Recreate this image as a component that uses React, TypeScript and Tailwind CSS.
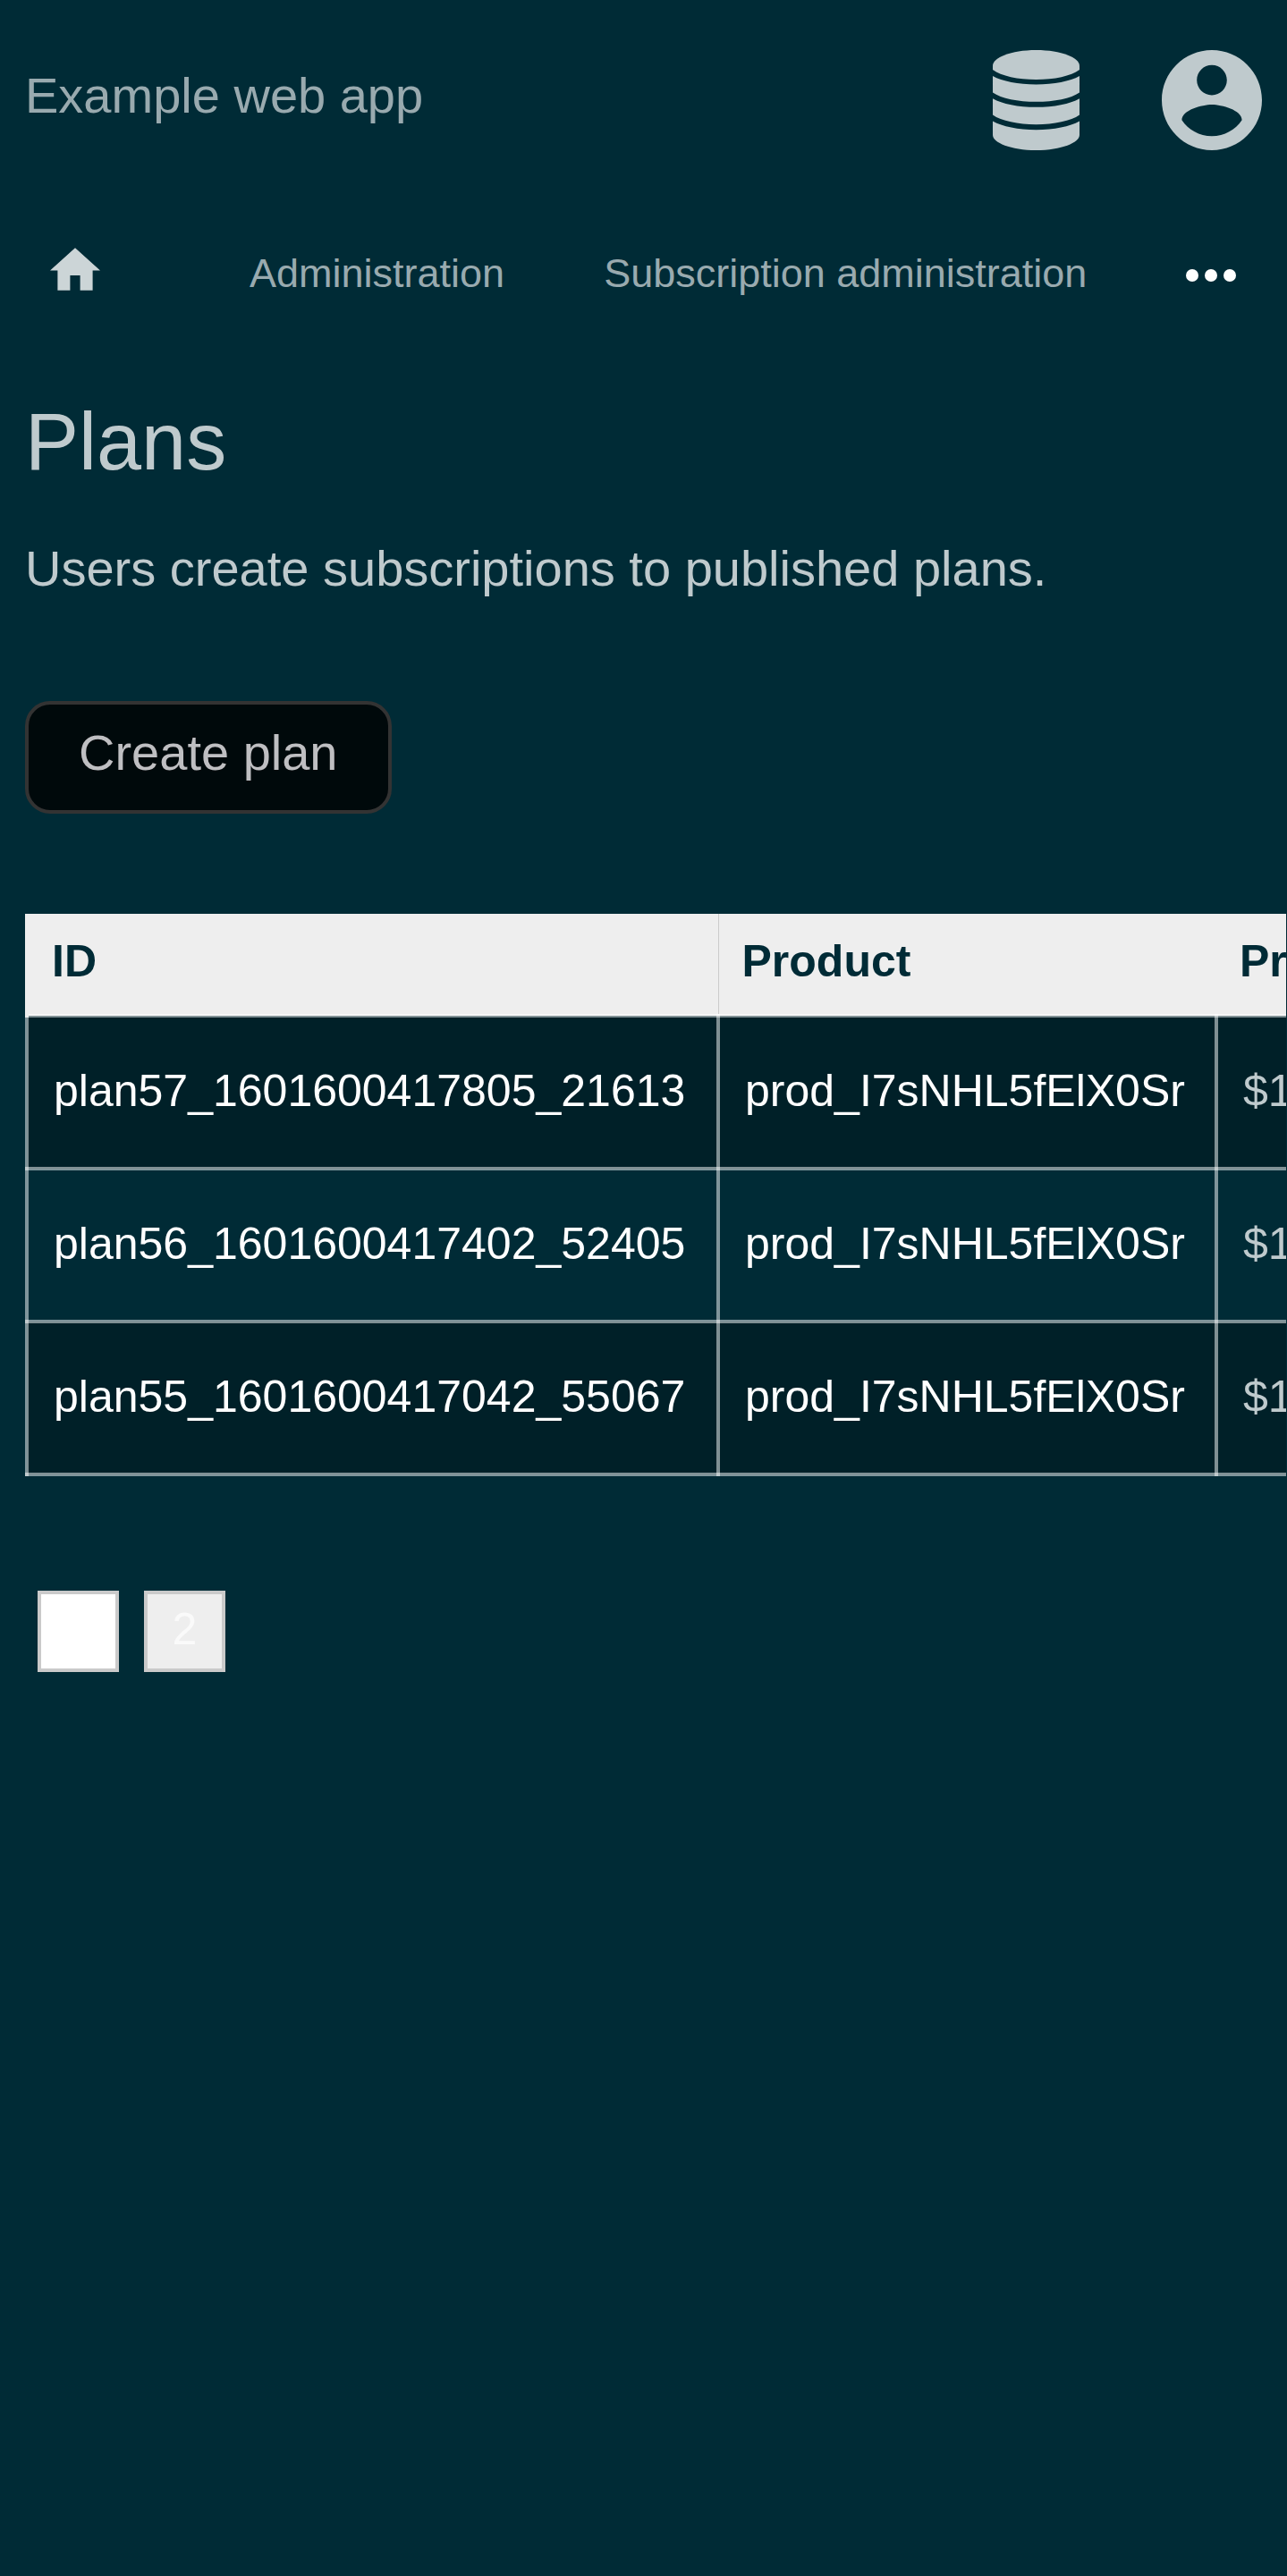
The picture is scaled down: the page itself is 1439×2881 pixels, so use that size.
const plans = [
  { id: "plan57_1601600417805_21613", product: "prod_I7sNHL5fElX0Sr", price: "$10.00" },
  { id: "plan56_1601600417402_52405", product: "prod_I7sNHL5fElX0Sr", price: "$10.00" },
  { id: "plan55_1601600417042_55067", product: "prod_I7sNHL5fElX0Sr", price: "$10.00" },
];

function DatabaseIcon() {
  return (
    <svg viewBox="0 0 290 335" className="h-28 w-[97px]" fill="currentColor" aria-hidden="true">
      <path d="M0 52C0 26 60 0 145 0s145 26 145 52v14C262 87 205 99 145 99S28 87 0 66z" />
      <path d="M0 87c32 18 85 28 145 28s113-10 145-28v55c-28 20-85 31-145 31S28 162 0 142z" />
      <path d="M0 162c32 18 85 29 145 29s113-11 145-29v55c-28 20-85 32-145 32S28 237 0 217z" />
      <path d="M0 238c32 18 85 29 145 29s113-11 145-29v46c0 25-60 51-145 51S0 309 0 284z" />
    </svg>
  );
}

function AccountIcon() {
  return (
    <svg viewBox="2 2 20 20" className="size-28" fill="currentColor" aria-hidden="true">
      <path d="M12 2C6.48 2 2 6.48 2 12s4.48 10 10 10 10-4.48 10-10S17.52 2 12 2zm0 3c1.66 0 3 1.34 3 3s-1.34 3-3 3-3-1.34-3-3 1.34-3 3-3zm0 14.2c-2.5 0-4.71-1.28-6-3.22.03-1.99 4-3.08 6-3.08 1.99 0 5.97 1.09 6 3.08-1.29 1.94-3.5 3.22-6 3.22z" />
    </svg>
  );
}

function HomeIcon() {
  return (
    <svg viewBox="2 3 20 17" className="h-12 w-14" fill="currentColor" aria-hidden="true">
      <path d="M10 20v-6h4v6h5v-8h3L12 3 2 12h3v8z" />
    </svg>
  );
}

function MoreIcon() {
  return (
    <svg viewBox="0 0 56 14" className="h-3.5 w-14" fill="currentColor" aria-hidden="true">
      <circle cx="7" cy="7" r="7" />
      <circle cx="28" cy="7" r="7" />
      <circle cx="49" cy="7" r="7" />
    </svg>
  );
}

export default function App() {
  return (
    <div className="min-h-screen overflow-hidden bg-[#002b36] font-['Liberation_Sans',Arial,sans-serif] text-[#bfcacd]">
      <header className="flex items-start justify-between px-7 py-14">
        <a href="#" className="text-[56px] leading-[102px] text-[#99aaaf]">
          Example web app
        </a>
        <div className="flex gap-[92px]">
          <button type="button" aria-label="Administrator menu">
            <DatabaseIcon />
          </button>
          <button type="button" aria-label="Account menu">
            <AccountIcon />
          </button>
        </div>
      </header>

      <nav className="flex h-[168px] items-center gap-[111px] px-14 text-[45px] text-[#99aaaf]">
        <a href="#" aria-label="Home" className="mr-14 pb-3.5 text-[#ccd5d7]">
          <HomeIcon />
        </a>
        <a href="#" className="pb-1 leading-[52px] whitespace-nowrap">
          Administration
        </a>
        <a href="#" className="pb-1 leading-[52px] whitespace-nowrap">
          Subscription administration
        </a>
        <button type="button" aria-label="More" className="text-white">
          <MoreIcon />
        </button>
      </nav>

      <main className="pl-7">
        <h1 className="mt-[52px] text-[90px] leading-[100px]">Plans</h1>
        <p className="mt-[60px] text-[56px] leading-[64px]">
          Users create subscriptions to published plans.
        </p>
        <button
          type="button"
          className="mt-[116px] block rounded-[28px] border-4 border-[#333] bg-[#00090b] px-14 pt-[22px] pb-8 text-[56px] leading-[64px] text-[#bfbfc2]"
        >
          Create plan
        </button>

        <div className="mt-28 mr-px overflow-hidden">
          <table className="w-[1860px] table-fixed border-collapse text-left text-[50px] leading-[56px]">
            <colgroup>
              <col className="w-[773px]" />
              <col className="w-[557px]" />
              <col />
            </colgroup>
            <thead className="bg-[#eee] text-[#002b36]">
              <tr className="h-[114px]">
                <th className="border-l-4 border-[#eee] px-[26px] pb-1.5 font-bold">ID</th>
                <th className="border-l border-[#cbcbcb] px-[26px] pb-1.5 font-bold">Product</th>
                <th className="px-[26px] pb-1.5 font-bold">Price</th>
              </tr>
            </thead>
            <tbody>
              {plans.map((plan) => (
                <tr key={plan.id} className="h-[171px] odd:bg-[#002028]">
                  <td className="border-4 border-white/50 px-7 pb-1">
                    <a href="#" className="text-white">
                      {plan.id}
                    </a>
                  </td>
                  <td className="border-4 border-white/50 px-7 pb-1">
                    <a href="#" className="text-white">
                      {plan.product}
                    </a>
                  </td>
                  <td className="border-4 border-white/50 px-7 pb-1">{plan.price}</td>
                </tr>
              ))}
            </tbody>
          </table>
        </div>

        <ul className="mt-32 flex gap-7 pl-3.5 text-center text-[50px] leading-[78px]">
          <li>
            <a href="#" aria-current="page" className="block size-[91px] border-4 border-[#cacaca] bg-white text-white">
              1
            </a>
          </li>
          <li>
            <a href="#" className="block size-[91px] border-4 border-[#cacaca] bg-[#eee] text-[#fafafa]">
              2
            </a>
          </li>
        </ul>
      </main>
    </div>
  );
}
